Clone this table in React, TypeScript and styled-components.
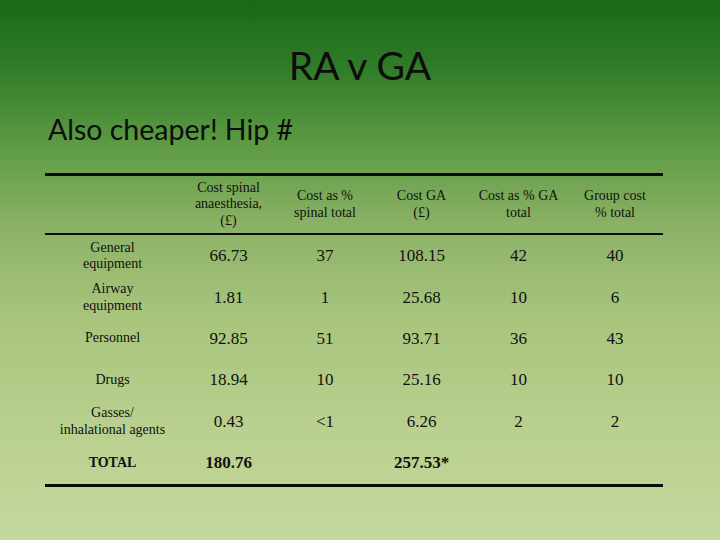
import React from 'react';
import styled, { createGlobalStyle } from 'styled-components';

const Global = createGlobalStyle`
  html, body { margin: 0; padding: 0; }
  body { width: 720px; height: 540px; overflow: hidden; }
`;

const Slide = styled.div`
  width: 720px;
  height: 540px;
  box-sizing: border-box;
  display: flex;
  flex-direction: column;
  background: linear-gradient(
    to bottom,
    #176a17 0%,
    #2f7b27 12%,
    #5b9942 26%,
    #8cb266 42%,
    #a7c47c 58%,
    #b8cf8d 78%,
    #c5d89d 100%
  );
`;

const Title = styled.h1`
  margin: 42px 0 0;
  font-family: Lato, "Open Sans", sans-serif;
  font-weight: 400;
  font-size: 39px;
  line-height: 47px;
  text-align: center;
  color: #0d0d0d;
`;

const Subtitle = styled.h2`
  margin: 24px 0 0 48px;
  font-family: Lato, "Open Sans", sans-serif;
  font-weight: 400;
  font-size: 28.5px;
  line-height: 32px;
  color: #0d0d0d;
`;

const Table = styled.table`
  margin: 28px 0 0 45px;
  width: 618px;
  border-collapse: separate;
  border-spacing: 0;
  border-top: 3px solid #0a0a0a;
  border-bottom: 3px solid #0a0a0a;
  table-layout: fixed;
  font-family: "Liberation Serif", "Times New Roman", serif;
  color: #111;
`;

const HeadRow = styled.tr`
  height: 59px;
`;

const HeadCell = styled.th<{ $w: number }>`
  border-bottom: 2px solid #0a0a0a;
  padding: 0;
  font-weight: 400;
  font-size: 14px;
  line-height: 16.5px;
  text-align: center;
  vertical-align: middle;
  width: ${(p) => p.$w}px;
`;

const Row = styled.tr<{ $h: number }>`
  height: ${(p) => p.$h}px;
`;

const Label = styled.td<{ $bold?: boolean }>`
  padding: 0;
  font-size: 14px;
  line-height: 16.5px;
  text-align: center;
  vertical-align: middle;
  font-weight: ${(p) => (p.$bold ? 700 : 400)};
`;

const Num = styled.td<{ $bold?: boolean }>`
  padding: 0;
  font-size: 17px;
  line-height: 20px;
  text-align: center;
  vertical-align: middle;
  font-weight: ${(p) => (p.$bold ? 700 : 400)};
`;

type RowData = { label: React.ReactNode; vals: string[]; h: number; bold?: boolean };

const rows: RowData[] = [
  { label: <>General<br />equipment</>, vals: ['66.73', '37', '108.15', '42', '40'], h: 42 },
  { label: <>Airway<br />equipment</>, vals: ['1.81', '1', '25.68', '10', '6'], h: 41 },
  { label: 'Personnel', vals: ['92.85', '51', '93.71', '36', '43'], h: 41 },
  { label: 'Drugs', vals: ['18.94', '10', '25.16', '10', '10'], h: 42 },
  { label: <>Gasses/<br />inhalational agents</>, vals: ['0.43', '<1', '6.26', '2', '2'], h: 41 },
  { label: 'TOTAL', vals: ['180.76', '', '257.53*', '', ''], h: 42, bold: true },
];

export default function App() {
  return (
    <>
      <Global />
      <Slide>
        <Title>RA v GA</Title>
        <Subtitle>Also cheaper! Hip #</Subtitle>
        <Table>
          <thead>
            <HeadRow>
              <HeadCell $w={135} />
              <HeadCell $w={97}>Cost spinal<br />anaesthesia,<br />(£)</HeadCell>
              <HeadCell $w={96}>Cost as %<br />spinal total</HeadCell>
              <HeadCell $w={97}>Cost GA<br />(£)</HeadCell>
              <HeadCell $w={97}>Cost as % GA<br />total</HeadCell>
              <HeadCell $w={96}>Group cost<br />% total</HeadCell>
            </HeadRow>
          </thead>
          <tbody>
            {rows.map((r, i) => (
              <Row key={i} $h={r.h}>
                <Label $bold={r.bold}>{r.label}</Label>
                {r.vals.map((v, j) => (
                  <Num key={j} $bold={r.bold}>{v}</Num>
                ))}
              </Row>
            ))}
          </tbody>
        </Table>
      </Slide>
    </>
  );
}
